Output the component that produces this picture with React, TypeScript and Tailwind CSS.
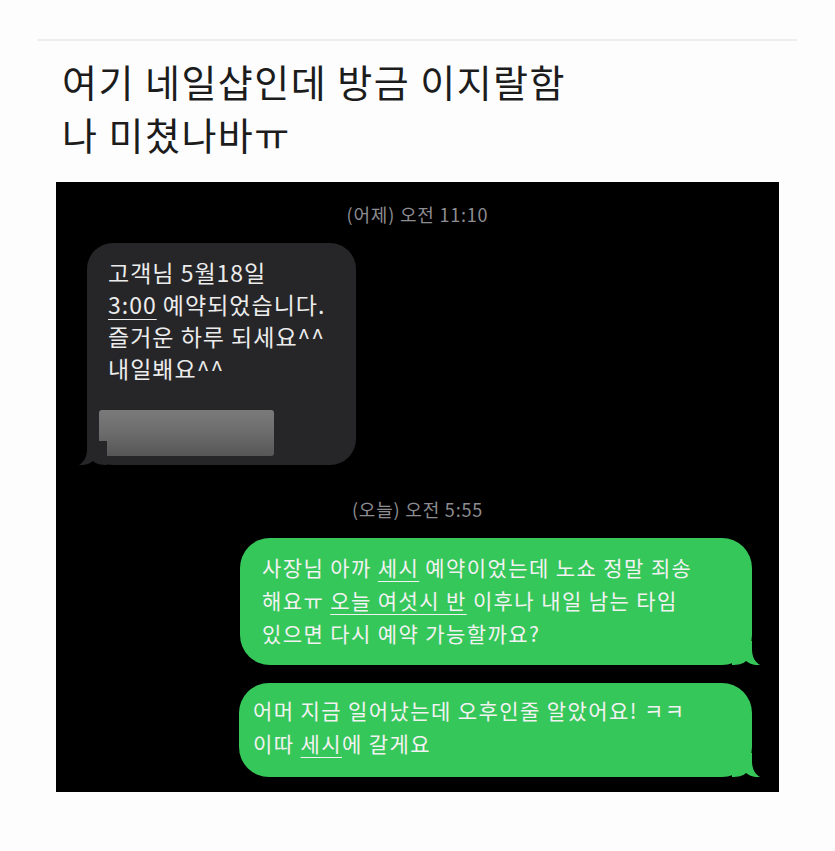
const kr = { fontFamily: '"Noto Sans CJK KR", "Noto Sans", sans-serif' };

function Tail({ color, side }: { color: string; side: "left" | "right" }) {
  return (
    <svg
      width="28"
      height="24"
      viewBox="0 0 28 24"
      className={
        side === "right"
          ? "absolute right-[-8px] bottom-0"
          : "absolute left-[-8px] bottom-0 -scale-x-100"
      }
    >
      <path
        d="M0 0 H20 V8 C20 16 23 21 28 24 C22 24.5 18 23 14 20 C11 23 6 24 0 24 Z"
        fill={color}
      />
    </svg>
  );
}

function U({ children }: { children: React.ReactNode }) {
  return <span className="underline decoration-1 underline-offset-[5px]">{children}</span>;
}

export default function App() {
  return (
    <div className="w-[835px] h-[851px] bg-[#fdfdfd] overflow-hidden" style={kr}>
      <div className="ml-[37px] mt-[39px] w-[760px] h-[2px] bg-[#eeeeee]" />

      <h1 className="mt-[13px] pl-[62px] text-[38px] leading-[53px] tracking-[1.5px] text-[#1c1c1c] font-normal">
        여기 네일샵인데 방금 이지랄함
        <br />
        나 미쳤나바ㅠ
      </h1>

      <div className="ml-[56px] mt-[22px] w-[723px] h-[610px] bg-black flex flex-col pt-[22px]">
        <div className="text-center text-[18px] leading-[20px] tracking-[0.8px] text-[#8d8d92]">(어제) 오전 11:10</div>

        <div className="relative ml-[31px] mt-[19px] w-[269px] h-[222px] rounded-[26px] bg-[#262628] pl-[21px] pt-[13px]">
          <p className="text-[23px] leading-[32px] tracking-[1px] text-[#ececec]">
            고객님 5월18일
            <br />
            <U>3:00</U> 예약되었습니다.
            <br />
            즐거운 하루 되세요^^
            <br />
            내일봬요^^
          </p>
          <div className="mt-[26px] ml-[-9px] w-[175px] h-[46px] rounded-[3px] bg-gradient-to-b from-[#7a7a7a] via-[#6c6c6c] to-[#565656]" />
          <Tail color="#262628" side="left" />
        </div>

        <div className="mt-[34px] text-center text-[18px] leading-[20px] tracking-[0.8px] text-[#8d8d92]">(오늘) 오전 5:55</div>

        <div className="relative ml-[184px] mt-[19px] w-[512px] h-[127px] rounded-[30px] bg-[#36c75a] pl-[22px] pt-[13px]">
          <p className="text-[21px] leading-[33px] tracking-[1.4px] text-[#f2f2f2]">
            사장님 아까 <U>세시</U> 예약이었는데 노쇼 정말 죄송
            <br />
            해요ㅠ <U>오늘 여섯시 반</U> 이후나 내일 남는 타임
            <br />
            있으면 다시 예약 가능할까요?
          </p>
          <Tail color="#36c75a" side="right" />
        </div>

        <div className="relative ml-[183px] mt-[18px] w-[513px] h-[94px] rounded-[30px] bg-[#36c75a] pl-[14px] pt-[11px]">
          <p className="text-[21px] leading-[33px] tracking-[1.4px] text-[#f2f2f2]">
            어머 지금 일어났는데 오후인줄 알았어요! ㅋㅋ
            <br />
            이따 <U>세시</U>에 갈게요
          </p>
          <Tail color="#36c75a" side="right" />
        </div>
      </div>
    </div>
  );
}
